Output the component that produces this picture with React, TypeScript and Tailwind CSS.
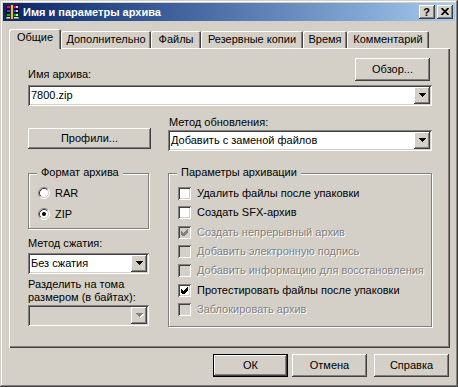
import React from "react";

const raised =
  "shadow-[inset_-1px_-1px_0_#404040,inset_1px_1px_0_#ffffff,inset_-2px_-2px_0_#808080,inset_2px_2px_0_#d4d0c8]";
const sunken =
  "shadow-[inset_1px_1px_0_#808080,inset_-1px_-1px_0_#ffffff,inset_2px_2px_0_#404040,inset_-2px_-2px_0_#d4d0c8]";
const disabledText = "text-[#808080] [text-shadow:1px_1px_0_#ffffff]";

function WinRarIcon() {
  return (
    <svg width="16" height="16" viewBox="0 0 16 16" shapeRendering="crispEdges">
      <rect x="1" y="1" width="13" height="4" fill="#400040" />
      <rect x="2" y="2" width="11" height="2" fill="#c0207a" />
      <rect x="11" y="2" width="2" height="2" fill="#f0d0e0" />
      <rect x="1" y="5" width="13" height="4" fill="#000040" />
      <rect x="2" y="6" width="11" height="2" fill="#3050e0" />
      <rect x="11" y="6" width="2" height="2" fill="#d0d8ff" />
      <rect x="1" y="9" width="13" height="4" fill="#003000" />
      <rect x="2" y="10" width="11" height="2" fill="#20a030" />
      <rect x="11" y="10" width="2" height="2" fill="#d0f0d0" />
      <rect x="1" y="13" width="13" height="2" fill="#808080" />
      <rect x="2" y="13" width="11" height="1" fill="#e0e0e0" />
      <rect x="5" y="0" width="4" height="16" fill="#403010" />
      <rect x="6" y="1" width="2" height="14" fill="#d8b870" />
    </svg>
  );
}

function Arrow({ disabled }: { disabled?: boolean }) {
  const shape = (c: string, dx: number, dy: number) => (
    <g fill={c} transform={`translate(${dx} ${dy})`}>
      <rect x="0" y="0" width="7" height="1" />
      <rect x="1" y="1" width="5" height="1" />
      <rect x="2" y="2" width="3" height="1" />
      <rect x="3" y="3" width="1" height="1" />
    </g>
  );
  return (
    <svg width="8" height="5" viewBox="0 0 8 5" shapeRendering="crispEdges">
      {disabled && shape("#ffffff", 1, 1)}
      {shape(disabled ? "#808080" : "#000000", 0, 0)}
    </svg>
  );
}

function Combo({ text, disabled, className }: { text?: string; disabled?: boolean; className: string }) {
  return (
    <div className={`${className} h-[21px] flex p-[2px] ${sunken} ${disabled ? "bg-[#d4d0c8]" : "bg-white"}`}>
      <div className="flex-1 flex items-center pl-[1px] whitespace-nowrap overflow-hidden">{text}</div>
      <div className={`w-[16px] h-[17px] bg-[#d4d0c8] flex items-center justify-center pl-[1px] ${raised}`}>
        <Arrow disabled={disabled} />
      </div>
    </div>
  );
}

function Button({ children, className, isDefault }: { children: React.ReactNode; className: string; isDefault?: boolean }) {
  return (
    <div
      className={`${className} bg-[#d4d0c8] flex items-center justify-center ${
        isDefault
          ? "shadow-[inset_0_0_0_1px_#000000,inset_-2px_-2px_0_#404040,inset_2px_2px_0_#ffffff,inset_-3px_-3px_0_#808080]"
          : raised
      }`}
    >
      {children}
    </div>
  );
}

function Radio({ checked }: { checked?: boolean }) {
  return (
    <svg width="12" height="12" viewBox="0 0 12 12">
      <circle cx="6" cy="6" r="4.2" fill="#ffffff" />
      <path d="M2.11 9.89 A5.5 5.5 0 0 1 9.89 2.11" stroke="#808080" fill="none" strokeWidth="1" />
      <path d="M9.89 2.11 A5.5 5.5 0 0 1 2.11 9.89" stroke="#ffffff" fill="none" strokeWidth="1" />
      <path d="M2.82 9.18 A4.5 4.5 0 0 1 9.18 2.82" stroke="#404040" fill="none" strokeWidth="1" />
      <path d="M9.18 2.82 A4.5 4.5 0 0 1 2.82 9.18" stroke="#d4d0c8" fill="none" strokeWidth="1" />
      {checked && <circle cx="6" cy="6" r="2" fill="#000000" />}
    </svg>
  );
}

function CheckBox({ checked, disabled }: { checked?: boolean; disabled?: boolean }) {
  return (
    <div className={`w-[13px] h-[13px] shrink-0 flex items-center justify-center ${sunken} ${disabled ? "bg-[#d4d0c8]" : "bg-white"}`}>
      {checked && (
        <svg width="7" height="7" viewBox="0 0 7 7" shapeRendering="crispEdges">
          <path d="M0 2 L2 4 L6 0 L7 0 L7 3 L2 8 L0 5 Z" fill={disabled ? "#808080" : "#000000"} />
        </svg>
      )}
    </div>
  );
}

const checks = [
  { label: "Удалить файлы после упаковки", h: "h-[19px]" },
  { label: "Создать SFX-архив", h: "h-[20px]" },
  { label: "Создать непрерывный архив", h: "h-[19px]", checked: true, disabled: true },
  { label: "Добавить электронную подпись", h: "h-[19px]", disabled: true },
  { label: "Добавить информацию для восстановления", h: "h-[20px]", disabled: true },
  { label: "Протестировать файлы после упаковки", h: "h-[19px]", checked: true },
  { label: "Заблокировать архив", h: "h-[13px]", disabled: true },
];

const tabs = [
  { label: "Дополнительно", w: "w-[90px]" },
  { label: "Файлы", w: "w-[50px]" },
  { label: "Резервные копии", w: "w-[102px]" },
  { label: "Время", w: "w-[44px]" },
  { label: "Комментарий", w: "w-[82px]" },
];

const groupBox = "relative border border-[#808080] shadow-[inset_1px_1px_0_#ffffff,1px_1px_0_#ffffff]";

export default function App() {
  return (
    <div className="w-[458px] h-[387px] bg-[#d4d0c8] p-[3px] flex flex-col font-['Liberation_Sans',Arial,sans-serif] text-[11px] leading-[13px] text-black overflow-hidden select-none shadow-[inset_-1px_-1px_0_#404040,inset_1px_1px_0_#d4d0c8,inset_-2px_-2px_0_#808080,inset_2px_2px_0_#ffffff]">
      {/* Title bar */}
      <div className="h-[18px] shrink-0 flex items-center bg-linear-to-r from-[#0a246a] to-[#a6caf0] px-[2px]">
        <WinRarIcon />
        <span className="ml-[2px] text-white font-bold text-[11px] leading-[13px]">Имя и параметры архива</span>
        <div className="ml-auto flex gap-[2px]">
          <div className={`w-[16px] h-[14px] bg-[#d4d0c8] flex items-center justify-center ${raised}`}>
            <span className="font-bold text-[11px] leading-[11px] pr-[1px]">?</span>
          </div>
          <div className={`w-[16px] h-[14px] bg-[#d4d0c8] flex items-center justify-center ${raised}`}>
            <svg width="8" height="7" viewBox="0 0 8 7" className="mb-[1px]">
              <path d="M0.5 0 L7.5 7 M7.5 0 L0.5 7" stroke="#000000" strokeWidth="1.7" />
            </svg>
          </div>
        </div>
      </div>

      {/* Tabs */}
      <div className="mt-[8px] h-[19px] shrink-0 flex items-end pl-[6px]">
        <div className="relative z-10 w-[52px] h-[20px] -mb-px bg-[#d4d0c8] rounded-t-[2px] flex justify-center pt-[2px] shadow-[inset_1px_1px_0_#ffffff,inset_-1px_0_0_#404040,inset_-2px_0_0_#808080]">
          Общие
        </div>
        {tabs.map((t) => (
          <div
            key={t.label}
            className={`${t.w} h-[17px] bg-[#d4d0c8] rounded-t-[2px] flex justify-center pt-[2px] whitespace-nowrap shadow-[inset_1px_1px_0_#ffffff,inset_-1px_0_0_#404040,inset_-2px_0_0_#808080]`}
          >
            {t.label}
          </div>
        ))}
      </div>

      {/* Panel */}
      <div className="ml-[6px] w-[441px] h-[300px] shrink-0 pl-[19px] pr-[18px] pt-[10px] flex flex-col shadow-[inset_1px_1px_0_#ffffff,inset_-1px_-1px_0_#404040,inset_-2px_-2px_0_#808080]">
        <div className="h-[23px] flex items-end justify-between">
          <span>Имя архива:</span>
          <Button className="w-[75px] h-[23px] mr-[2px]">Обзор...</Button>
        </div>
        <Combo className="mt-[4px] w-full" text="7800.zip" />

        <div className="mt-[10px] flex gap-[19px]">
          <div className="w-[121px]">
            <Button className="mt-[12px] w-[123px] h-[21px]">Профили...</Button>
          </div>
          <div className="w-[264px] flex flex-col">
            <span className="ml-[1px]">Метод обновления:</span>
            <Combo className="mt-[1px] w-full" text="Добавить с заменой файлов" />
          </div>
        </div>

        <div className="mt-[22px] flex gap-[19px] items-start">
          <div className="w-[121px] flex flex-col">
            <div className={`${groupBox} w-[121px] h-[56px] pl-[9px] pt-[13px]`}>
              <span className="absolute left-[8px] top-[-8px] px-[4px] bg-[#d4d0c8]">Формат архива</span>
              <div className="h-[21px] flex items-start">
                <Radio />
                <span className="ml-[5px]">RAR</span>
              </div>
              <div className="h-[13px] flex items-start">
                <Radio checked />
                <span className="ml-[5px]">ZIP</span>
              </div>
            </div>
            <span className="mt-[8px]">Метод сжатия:</span>
            <Combo className="mt-[3px] w-[121px]" text="Без сжатия" />
            <span className="mt-[4px]">
              Разделить на тома
              <br />
              размером (в байтах):
            </span>
            <Combo className="mt-[1px] w-[121px]" disabled />
          </div>

          <div className={`${groupBox} w-[264px] h-[154px] pl-[9px] pt-[13px] flex flex-col`}>
            <span className="absolute left-[8px] top-[-8px] px-[4px] bg-[#d4d0c8]">Параметры архивации</span>
            {checks.map((c) => (
              <div key={c.label} className={`${c.h} flex items-start shrink-0`}>
                <CheckBox checked={c.checked} disabled={c.disabled} />
                <span className={`ml-[6px] whitespace-nowrap ${c.disabled ? disabledText : ""}`}>{c.label}</span>
              </div>
            ))}
          </div>
        </div>
      </div>

      {/* Bottom buttons */}
      <div className="mt-[6px] h-[23px] flex shrink-0">
        <Button isDefault className="ml-[210px] w-[75px] h-[23px]">
          ОК
        </Button>
        <Button className="ml-[4px] w-[75px] h-[23px]">Отмена</Button>
        <Button className="ml-[7px] w-[75px] h-[23px]">Справка</Button>
      </div>
    </div>
  );
}
